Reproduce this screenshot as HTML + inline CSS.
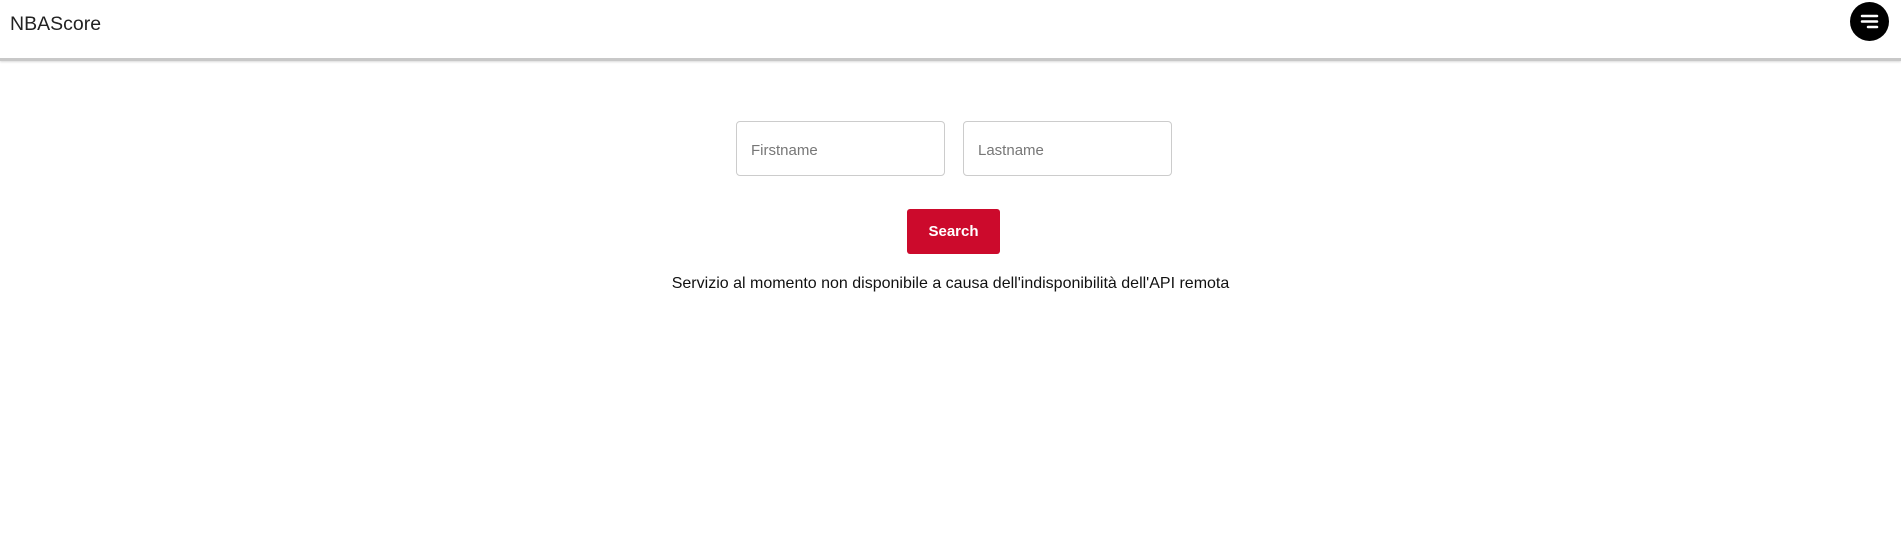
<!DOCTYPE html>
<html><head><style>
body{margin:0;width:1901px;height:555px;background:#fff;font-family:"Liberation Sans",sans-serif;overflow:hidden;position:relative}
.hdr{position:absolute;left:0;top:0;width:1901px;height:58px;background:#fff;border-bottom:3px solid #c8c8c8;box-shadow:0 1px 2px rgba(0,0,0,.15)}
.title{position:absolute;left:10px;top:13px;font-size:19.5px;color:#222}
.menu{position:absolute;left:1850px;top:2px;width:39px;height:39px;border-radius:50%;background:#000}
.in{position:absolute;top:121px;width:207px;height:53px;border:1px solid #ccc;border-radius:4px;font-size:15px;color:#777;line-height:58px;box-sizing:content-box}
.in span{margin-left:14px}
.btn{position:absolute;left:907px;top:209px;width:93px;height:45px;background:#cc0a2c;border-radius:3px;color:#fff;font-weight:bold;font-size:15px;text-align:center;line-height:45px}
.msg{position:absolute;left:0;width:1901px;top:275px;text-align:center;font-size:16px;color:#111}
</style></head><body>
<div class="hdr"><div class="title">NBAScore</div>
<div class="menu"><svg width="39" height="39"><g stroke="#fff" stroke-width="2.5" stroke-linecap="round"><line x1="12" y1="14" x2="27" y2="14"/><line x1="12" y1="19.5" x2="27" y2="19.5"/><line x1="18" y1="25" x2="27" y2="25"/></g></svg></div></div>
<div class="in" style="left:736px"><span>Firstname</span></div>
<div class="in" style="left:963px"><span>Lastname</span></div>
<div class="btn">Search</div>
<div class="msg">Servizio al momento non disponibile a causa dell'indisponibilità dell'API remota</div>
</body></html>
